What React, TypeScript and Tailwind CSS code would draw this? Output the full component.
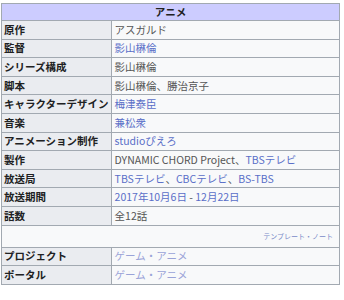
import React from "react";

const L = "text-[#5a6fc8]";

type Row = { label: string; value: React.ReactNode };

const rows: Row[] = [
  { label: "原作", value: <span>アスガルド</span> },
  { label: "監督", value: <span className={L}>影山楙倫</span> },
  { label: "シリーズ構成", value: <span>影山楙倫</span> },
  { label: "脚本", value: <span>影山楙倫、勝治京子</span> },
  { label: "キャラクターデザイン", value: <span className={L}>梅津泰臣</span> },
  { label: "音楽", value: <span className={L}>兼松衆</span> },
  { label: "アニメーション制作", value: <span className={L}>studioぴえろ</span> },
  {
    label: "製作",
    value: (
      <span>
        DYNAMIC CHORD Project、<span className={L}>TBSテレビ</span>
      </span>
    ),
  },
  {
    label: "放送局",
    value: (
      <span>
        <span className={L}>TBSテレビ</span>、<span className={L}>CBCテレビ</span>、
        <span className={L}>BS-TBS</span>
      </span>
    ),
  },
  {
    label: "放送期間",
    value: (
      <span>
        <span className={L}>2017年</span>
        <span className={L}>10月6日</span> - <span className={L}>12月22日</span>
      </span>
    ),
  },
  { label: "話数", value: <span>全12話</span> },
];

const bottom: Row[] = [
  { label: "プロジェクト", value: <span className="text-[#9aa3d8]">ゲーム・アニメ</span> },
  { label: "ポータル", value: <span className="text-[#9aa3d8]">ゲーム・アニメ</span> },
];

function R({ r }: { r: Row }) {
  return (
    <tr className="h-[18.6px]">
      <th className="border border-[#a2a9b1] bg-[#eaecf0] px-[2px] text-left font-bold text-[#202122] whitespace-nowrap">
        {r.label}
      </th>
      <td className="border border-[#a2a9b1] bg-[#f8f9fa] px-[3px] text-[#555] whitespace-nowrap">
        {r.value}
      </td>
    </tr>
  );
}

export default function App() {
  return (
    <div
      className="w-[344px] h-[300px] bg-white pt-[3px] pl-[1px]"
      style={{ fontFamily: '"Noto Sans CJK JP", "Noto Sans", sans-serif' }}
    >
      <table className="w-[339px] border-collapse border border-[#a2a9b1] text-[10.5px] leading-[14px]">
        <colgroup>
          <col className="w-[106px]" />
          <col />
        </colgroup>
        <tbody>
          <tr className="h-[17px]">
            <th
              colSpan={2}
              className="border border-[#a2a9b1] bg-[#ccccff] text-center font-bold text-[#202122]"
            >
              アニメ
            </th>
          </tr>
          {rows.map((r) => (
            <R key={r.label} r={r} />
          ))}
          <tr className="h-[22px]">
            <td
              colSpan={2}
              className="border border-[#a2a9b1] bg-[#f8f9fa] px-[6px] text-right text-[7px] text-[#7a8bc8]"
            >
              テンプレート・ノート
            </td>
          </tr>
          {bottom.map((r) => (
            <R key={r.label} r={r} />
          ))}
        </tbody>
      </table>
    </div>
  );
}
